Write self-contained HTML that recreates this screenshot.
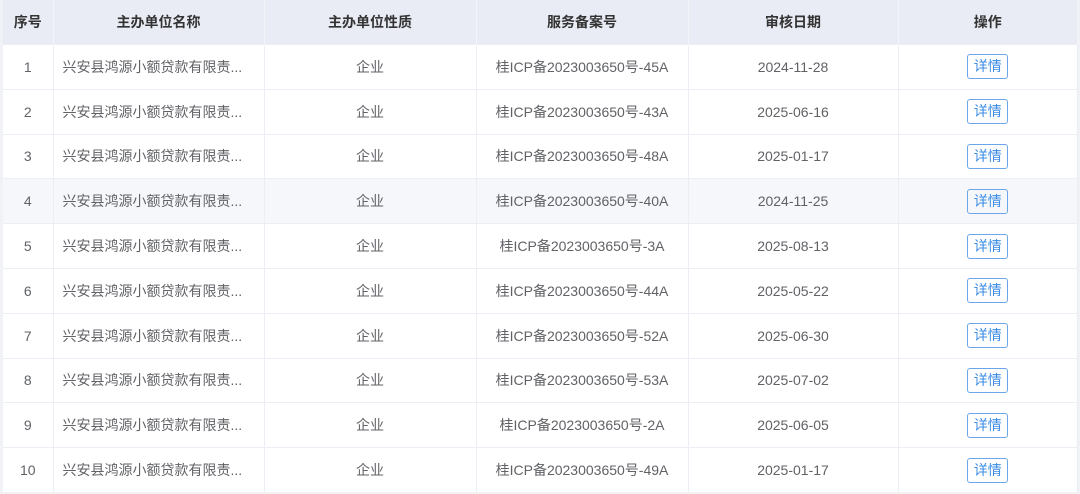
<!DOCTYPE html>
<html><head><meta charset="utf-8"><style>
html,body{margin:0;padding:0;background:#f0f2f5;}
body{width:1080px;height:494px;overflow:hidden;font-family:"Liberation Sans","Noto Sans CJK SC",sans-serif;}
table{position:absolute;left:3px;top:0;width:1075px;border-collapse:collapse;table-layout:fixed;background:#fff;}
th{background:#e9ecf4;height:44px;font-size:14px;font-weight:bold;color:#333;border-right:1px solid #f3f4f7;padding:0;}
td{height:43.8px;font-size:14px;color:#606266;text-align:center;border-top:1px solid #ebeef5;border-right:1px solid #ebeef5;padding:0;}
td.n{text-align:left;padding-left:9px;}
tr.h td{background:#f5f7fa;}
.b{display:inline-block;width:41px;height:25px;line-height:23px;border:1px solid #6ba6ea;border-radius:3px;color:#3c8ce6;font-size:14px;box-sizing:border-box;vertical-align:middle;}
</style></head><body>
<table>
<colgroup><col style="width:50px"><col style="width:211px"><col style="width:212px"><col style="width:212px"><col style="width:210px"><col></colgroup>
<tr><th>序号</th><th>主办单位名称</th><th>主办单位性质</th><th>服务备案号</th><th>审核日期</th><th>操作</th></tr>
<tr><td>1</td><td class="n">兴安县鸿源小额贷款有限责...</td><td>企业</td><td>桂ICP备2023003650号-45A</td><td>2024-11-28</td><td><span class="b">详情</span></td></tr>
<tr><td>2</td><td class="n">兴安县鸿源小额贷款有限责...</td><td>企业</td><td>桂ICP备2023003650号-43A</td><td>2025-06-16</td><td><span class="b">详情</span></td></tr>
<tr><td>3</td><td class="n">兴安县鸿源小额贷款有限责...</td><td>企业</td><td>桂ICP备2023003650号-48A</td><td>2025-01-17</td><td><span class="b">详情</span></td></tr>
<tr class="h"><td>4</td><td class="n">兴安县鸿源小额贷款有限责...</td><td>企业</td><td>桂ICP备2023003650号-40A</td><td>2024-11-25</td><td><span class="b">详情</span></td></tr>
<tr><td>5</td><td class="n">兴安县鸿源小额贷款有限责...</td><td>企业</td><td>桂ICP备2023003650号-3A</td><td>2025-08-13</td><td><span class="b">详情</span></td></tr>
<tr><td>6</td><td class="n">兴安县鸿源小额贷款有限责...</td><td>企业</td><td>桂ICP备2023003650号-44A</td><td>2025-05-22</td><td><span class="b">详情</span></td></tr>
<tr><td>7</td><td class="n">兴安县鸿源小额贷款有限责...</td><td>企业</td><td>桂ICP备2023003650号-52A</td><td>2025-06-30</td><td><span class="b">详情</span></td></tr>
<tr><td>8</td><td class="n">兴安县鸿源小额贷款有限责...</td><td>企业</td><td>桂ICP备2023003650号-53A</td><td>2025-07-02</td><td><span class="b">详情</span></td></tr>
<tr><td>9</td><td class="n">兴安县鸿源小额贷款有限责...</td><td>企业</td><td>桂ICP备2023003650号-2A</td><td>2025-06-05</td><td><span class="b">详情</span></td></tr>
<tr><td>10</td><td class="n">兴安县鸿源小额贷款有限责...</td><td>企业</td><td>桂ICP备2023003650号-49A</td><td>2025-01-17</td><td><span class="b">详情</span></td></tr>
</table>
</body></html>
